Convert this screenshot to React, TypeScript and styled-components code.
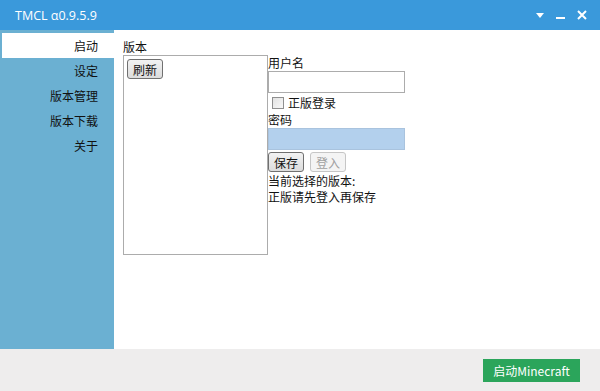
import styled, { createGlobalStyle } from 'styled-components';

const GlobalStyle = createGlobalStyle`
  html, body {
    margin: 0;
    padding: 0;
    background: #ffffff;
  }
  body {
    font-family: "Noto Sans CJK SC", "Noto Sans", sans-serif;
    font-size: 12px;
    color: #111;
  }
`;

const menuItems = ['启动', '设定', '版本管理', '版本下载', '关于'];

const App = () => {
  return (
    <Window>
      <GlobalStyle />
      <TitleBar>
        <Title>TMCL α0.9.5.9</Title>
        <WinButtons>
          <WinButton>
            <svg width="8" height="5" viewBox="0 0 8 5">
              <path d="M0 0 L8 0 L4 5 Z" fill="#fff" />
            </svg>
          </WinButton>
          <WinButton>
            <svg width="9" height="8" viewBox="0 0 9 8">
              <rect x="0" y="6" width="9" height="2" fill="#fff" />
            </svg>
          </WinButton>
          <WinButton>
            <svg width="10" height="10" viewBox="0 0 10 10">
              <path d="M1 1 L9 9 M9 1 L1 9" stroke="#fff" strokeWidth="2" />
            </svg>
          </WinButton>
        </WinButtons>
      </TitleBar>
      <Main>
        <Sidebar>
          {menuItems.map((item, i) => (
            <MenuItem key={item} $active={i === 0}>
              {item}
            </MenuItem>
          ))}
        </Sidebar>
        <Content>
          <VersionColumn>
            <Label>版本</Label>
            <VersionList>
              <Button>刷新</Button>
            </VersionList>
          </VersionColumn>
          <LoginColumn>
            <Label>用户名</Label>
            <TextInput />
            <CheckRow>
              <CheckBox />
              <span>正版登录</span>
            </CheckRow>
            <Label>密码</Label>
            <TextInput $filled />
            <ButtonRow>
              <Button>保存</Button>
              <Button $disabled>登入</Button>
            </ButtonRow>
            <InfoLine>当前选择的版本:</InfoLine>
            <InfoLine>正版请先登入再保存</InfoLine>
          </LoginColumn>
        </Content>
      </Main>
      <BottomBar>
        <LaunchButton>启动Minecraft</LaunchButton>
      </BottomBar>
    </Window>
  );
};

const Window = styled.div`
  width: 600px;
  height: 391px;
  display: flex;
  flex-direction: column;
  overflow: hidden;
`;

const TitleBar = styled.div`
  height: 30px;
  background-color: #3a99db;
  display: flex;
  align-items: center;
  justify-content: space-between;
  padding: 0 13px 0 15px;
`;

const Title = styled.div`
  color: #fff;
  font-family: "Open Sans", "Noto Sans", sans-serif;
  font-size: 12.5px;
`;

const WinButtons = styled.div`
  display: flex;
  align-items: center;
  gap: 10px;
`;

const WinButton = styled.div`
  width: 11px;
  height: 12px;
  display: flex;
  align-items: center;
  justify-content: center;
`;

const Main = styled.div`
  height: 319px;
  display: flex;
`;

const Sidebar = styled.div`
  width: 114px;
  background-color: #6bb0d2;
  padding-top: 3px;
  display: flex;
  flex-direction: column;
`;

const MenuItem = styled.div<{ $active?: boolean }>`
  height: 25px;
  margin-left: 2px;
  padding-right: 16px;
  display: flex;
  align-items: center;
  justify-content: flex-end;
  background-color: ${(p) => (p.$active ? '#ffffff' : 'transparent')};
  color: #111;
`;

const Content = styled.div`
  flex: 1;
  display: flex;
  padding: 9px 0 0 9px;
`;

const VersionColumn = styled.div`
  width: 145px;
  display: flex;
  flex-direction: column;
`;

const Label = styled.div`
  height: 16px;
  line-height: 16px;
`;

const VersionList = styled.div`
  height: 200px;
  border: 1px solid #acacac;
  box-sizing: border-box;
  padding: 3px;
`;

const LoginColumn = styled.div`
  width: 137px;
  padding-top: 16px;
  display: flex;
  flex-direction: column;
`;

const TextInput = styled.div<{ $filled?: boolean }>`
  height: 22px;
  box-sizing: border-box;
  border: 1px solid ${(p) => (p.$filled ? '#a9c3de' : '#acacac')};
  background-color: ${(p) => (p.$filled ? '#b3d0ed' : '#fff')};
`;

const CheckRow = styled.div`
  height: 19px;
  display: flex;
  align-items: center;
  gap: 4px;
  padding-left: 4px;
`;

const CheckBox = styled.div`
  width: 12px;
  height: 12px;
  box-sizing: border-box;
  border: 1px solid #8f8f8f;
  background: linear-gradient(135deg, #e2e2e2, #f8f8f8);
`;

const ButtonRow = styled.div`
  display: flex;
  gap: 6px;
  margin: 2px 0 1px;
`;

const Button = styled.div<{ $disabled?: boolean }>`
  width: 36px;
  height: 20px;
  box-sizing: border-box;
  display: flex;
  align-items: center;
  justify-content: center;
  border: 1px solid ${(p) => (p.$disabled ? '#c6c6c6' : '#707070')};
  border-radius: 3px;
  background: ${(p) =>
    p.$disabled ? '#f4f4f4' : 'linear-gradient(#f2f2f2, #dcdcdc)'};
  color: ${(p) => (p.$disabled ? '#a0a0a0' : '#111')};
`;

const InfoLine = styled.div`
  height: 16px;
  line-height: 16px;
  white-space: nowrap;
`;

const BottomBar = styled.div`
  flex: 1;
  background-color: #eeeded;
  display: flex;
  align-items: center;
  justify-content: flex-end;
  padding-right: 20px;
`;

const LaunchButton = styled.div`
  width: 97px;
  height: 23px;
  background-color: #2ba55b;
  color: #fff;
  display: flex;
  align-items: center;
  justify-content: center;
  font-size: 12px;
`;

export default App;
